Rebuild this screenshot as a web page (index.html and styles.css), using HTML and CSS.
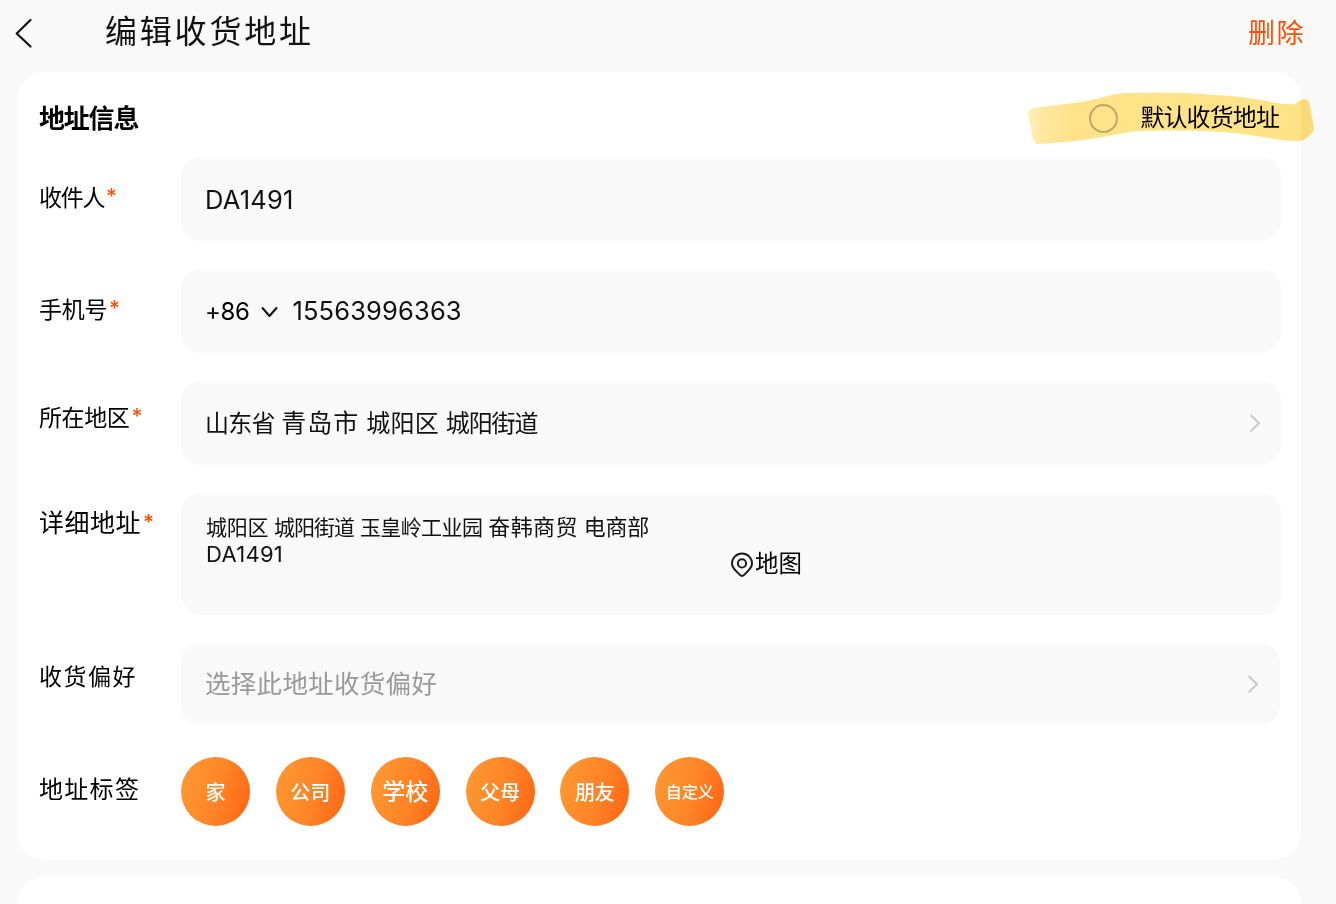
FILE: index.html
```html
<!DOCTYPE html>
<html lang="zh-CN">
<head>
    <meta charset="UTF-8">
    <meta name="viewport" content="width=device-width, initial-scale=1.0">
    <title>编辑收货地址</title>
    <link rel="stylesheet" href="styles.css">
</head>
<body>
    <header class="topbar">
        <svg class="back" width="20" height="32" viewBox="0 0 20 32" fill="none" stroke="#111" stroke-width="2.2" stroke-linecap="round" stroke-linejoin="round">
            <path d="M15.5 3 L1.7 16.5 L15.5 29.5"/>
        </svg>
        <h1>编辑收货地址</h1>
        <a class="delete">删除</a>
    </header>

    <main class="card">
        <div class="card-head">
            <h2>地址信息</h2>
            <div class="default-option">
                <span class="radio"></span>
                <span class="default-text">默认收货地址</span>
                <svg class="marker" width="290" height="56" viewBox="0 0 290 56">
                    <defs>
                        <linearGradient id="ink" x1="0" x2="1" y1="0" y2="0">
                            <stop offset="0" stop-color="#ffefb8"/>
                            <stop offset="0.06" stop-color="#ffe79f"/>
                            <stop offset="0.15" stop-color="#ffe38a"/>
                            <stop offset="0.93" stop-color="#ffe388"/>
                            <stop offset="0.97" stop-color="#ffdf78"/>
                            <stop offset="1" stop-color="#ffe283"/>
                        </linearGradient>
                    </defs>
                    <path fill="url(#ink)" d="M3 24 Q3 19 8 18 C30 15 50 13 62 11 C76 8 88 4 99 3 C130 2 160 2 190 5 C215 6 238 10 252 13 Q262 15 270 14 L274 11 Q279 7 283 11 Q285 13 286 22 L289 38 Q289 42 284 46 Q279 51 272 51 C255 51 235 46 210 43 C180 40 140 40 112 41 C90 44 70 49 50 51 L15 54 Q10 55 8 50 Z"/>
                </svg>
            </div>
        </div>

        <div class="row">
            <label class="label name">收件人<i>*</i></label>
            <div class="field"><span class="value recipient">DA1491</span></div>
        </div>

        <div class="row">
            <label class="label phone">手机号<i>*</i></label>
            <div class="field">
                <span class="value code">+86</span>
                <svg class="down" width="18" height="12" viewBox="0 0 18 12" fill="none" stroke="#111" stroke-width="2" stroke-linecap="round" stroke-linejoin="round">
                    <path d="M2.5 2 L9.5 10 L16.5 2"/>
                </svg>
                <span class="value number">15563996363</span>
            </div>
        </div>

        <div class="row">
            <label class="label region">所在地区<i>*</i></label>
            <div class="field">
                <span class="value area"><span class="province">山东省</span> <span class="city">青岛市</span> <span class="district">城阳区</span> <span class="street">城阳街道</span></span>
                <svg class="arrow" width="12" height="18" viewBox="0 0 12 18" fill="none" stroke="#c8c8c8" stroke-width="2">
                    <path d="M1.5 1 L10 9.3 L1.5 17.5"/>
                </svg>
            </div>
        </div>

        <div class="row">
            <label class="label detail">详细地址<i>*</i></label>
            <div class="field tall">
                <p class="address"><span class="line"><span class="district">城阳区</span> <span class="street">城阳街道</span> <span class="park">玉皇岭工业园</span> <span class="company">奋韩商贸</span> <span class="dept">电商部</span></span><br><span class="house">DA1491</span></p>
                <div class="map">
                    <svg width="24" height="26" viewBox="0 0 24 26" fill="none" stroke="#1c1c1c" stroke-width="2">
                        <path d="M12 24 C10.8 24 10 23 7 20 C4 17.3 2 14.8 2 11.3 A10 9.8 0 0 1 22 11.3 C22 14.8 20 17.3 17 20 C14 23 13.2 24 12 24 Z"/>
                        <circle cx="12" cy="11.4" r="4.1"/>
                    </svg>
                    <span>地图</span>
                </div>
            </div>
        </div>

        <div class="row">
            <label class="label prefer">收货偏好</label>
            <div class="field short">
                <span class="placeholder">选择此地址收货偏好</span>
                <svg class="arrow" width="12" height="18" viewBox="0 0 12 18" fill="none" stroke="#c8c8c8" stroke-width="2">
                    <path d="M1.5 1 L10 9.3 L1.5 17.5"/>
                </svg>
            </div>
        </div>

        <div class="row tags-row">
            <label class="label tag-label">地址标签</label>
            <div class="tags">
                <span class="tag">家</span>
                <span class="tag">公司</span>
                <span class="tag large">学校</span>
                <span class="tag">父母</span>
                <span class="tag">朋友</span>
                <span class="tag small">自定义</span>
            </div>
        </div>
    </main>

    <section class="card next"></section>
</body>
</html>
```

FILE: styles.css
```css
* {
    box-sizing: border-box;
}
body {
    margin: 0;
    background: #f9f9f9;
    color: #111;
    font-family: Inter, "Noto Sans CJK SC", sans-serif;
}
h1, h2, p {
    margin: 0;
}
svg {
    display: block;
    flex: none;
}
.topbar {
    display: flex;
    align-items: center;
    height: 72px;
    padding: 0 31px 8px 15px;
}
.back {
    margin-top: 2px;
}
h1 {
    margin-left: 70px;
    font-size: 32px;
    font-weight: 400;
    line-height: 40px;
    letter-spacing: 2.8px;
}
.delete {
    margin-left: auto;
    padding-top: 3px;
    font-size: 27px;
    line-height: 40px;
    letter-spacing: 1.5px;
    color: #ff5000;
}
.card {
    width: 1284px;
    height: 788px;
    margin-left: 17px;
    padding: 0 20px 0 22px;
    background: #fff;
    border-radius: 28px;
}
.card.next {
    height: 27px;
    margin-top: 17px;
    border-radius: 28px 28px 0 0;
}
.card-head {
    display: flex;
    justify-content: space-between;
    align-items: center;
    height: 85px;
    padding-top: 8px;
}
h2 {
    padding-top: 1px;
    font-size: 26px;
    font-weight: 700;
    line-height: 36px;
    letter-spacing: -1.2px;
    color: #000;
}
.default-option {
    position: relative;
    display: flex;
    align-items: center;
    padding-right: 2px;
    font-size: 24px;
    line-height: 34px;
    color: #000;
}
.radio {
    width: 29px;
    height: 29px;
    margin-right: 22px;
    border: 2px solid #bdbdbd;
    border-radius: 50%;
}
.default-text {
    margin-top: -2px;
    letter-spacing: -0.9px;
}
/* highlighter stroke over the default option */
.marker {
    position: absolute;
    left: -64px;
    top: -13px;
    mix-blend-mode: multiply;
    filter: blur(0.7px);
}
.row {
    display: flex;
    align-items: flex-start;
    margin-bottom: 28px;
}
.label {
    width: 142px;
    flex: none;
    line-height: 30px;
    white-space: nowrap;
    color: #000;
}
.label i {
    margin-left: 2px;
    font-family: Inter, sans-serif;
    font-size: 21px;
    font-style: normal;
    font-weight: 500;
    line-height: 1;
    letter-spacing: 0;
    vertical-align: 2px;
    color: #ff5000;
}
.name {
    padding-top: 26px;
    font-size: 23px;
    letter-spacing: -1.3px;
}
.phone {
    padding-top: 26px;
    font-size: 23px;
    letter-spacing: -0.3px;
}
.region {
    padding-top: 22px;
    font-size: 23px;
    letter-spacing: -0.4px;
}
.detail {
    padding-top: 15px;
    font-size: 25px;
    letter-spacing: 0.5px;
}
.prefer {
    padding-top: 19px;
    font-size: 23px;
    letter-spacing: 1.5px;
}
.tag-label {
    padding-top: 18px;
    font-size: 24px;
    letter-spacing: 1.3px;
}
.field {
    display: flex;
    align-items: center;
    width: 1100px;
    height: 84px;
    padding: 0 20px 0 24px;
    background: #f9f9f9;
    border-radius: 20px;
}
.field.tall {
    align-items: flex-start;
    height: 122px;
    padding-top: 21px;
}
.field.short {
    width: 1099px;
    height: 82px;
    padding-right: 21px;
}
.value {
    font-size: 25.5px;
    line-height: 36px;
}
.recipient {
    margin-top: 2px;
    letter-spacing: 0.2px;
}
.code {
    margin-top: 2px;
    font-size: 24px;
    letter-spacing: -0.4px;
    color: #000;
}
.down {
    margin: 2px 14px 0 11px;
}
.number {
    letter-spacing: 0.15px;
}
.area {
    margin-top: 1px;
    font-size: 24px;
}
.area .province {
    letter-spacing: -0.8px;
}
.area .city {
    font-size: 25px;
    letter-spacing: 1px;
}
.area .district {
    letter-spacing: 0.3px;
}
.area .street {
    letter-spacing: -1.1px;
}
.arrow {
    margin-left: auto;
}
.address {
    width: 525px;
    padding-left: 1px;
    font-size: 22px;
    line-height: 26px;
    white-space: nowrap;
}
.line {
    font-size: 21px;
}
.line .district {
    letter-spacing: -0.3px;
}
.line .street {
    letter-spacing: -1px;
}
.line .park {
    letter-spacing: -0.6px;
}
.line .company {
    font-size: 22px;
    letter-spacing: 0.4px;
}
.line .dept {
    font-size: 22px;
    letter-spacing: -0.3px;
}
.house {
    letter-spacing: 0.3px;
}
.map {
    display: flex;
    align-items: center;
    margin-top: 37px;
    font-size: 23.5px;
    line-height: 30px;
    color: #000;
}
.map span {
    margin: -2px 0 0 1px;
}
.placeholder {
    font-size: 25.5px;
    line-height: 36px;
    letter-spacing: 0.3px;
    color: #999;
}
.tags-row {
    margin-bottom: 0;
    padding-top: 4px;
}
.tags {
    display: flex;
    gap: 25.85px;
}
.tag {
    display: flex;
    align-items: center;
    justify-content: center;
    width: 69px;
    height: 69px;
    border-radius: 50%;
    background: linear-gradient(105deg, #ff9632 10%, #ff8426 55%, #ff6a17 90%);
    color: #fff;
    font-size: 20px;
    font-weight: 500;
}
.tag.large {
    padding-bottom: 3px;
    font-size: 23px;
}
.tag.small {
    padding-bottom: 2px;
    font-size: 16px;
}
```
